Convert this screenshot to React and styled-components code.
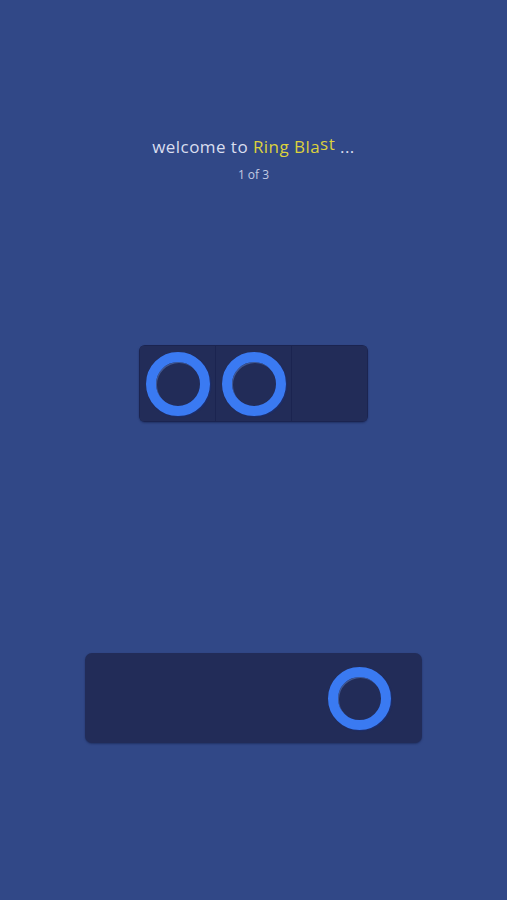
import React from 'react'
import styled, { createGlobalStyle } from 'styled-components'

const GlobalStyle = createGlobalStyle`
  html, body {
    margin: 0;
    padding: 0;
    background: #314887;
  }
  body {
    font-family: "Open Sans", "Liberation Sans", sans-serif;
  }
`

const Screen = styled.div`
  width: 507px;
  height: 900px;
  background: #314887;
  display: flex;
  flex-direction: column;
  align-items: center;
  box-sizing: border-box;
  padding-top: 135px;
`

const Header = styled.div`
  display: flex;
  flex-direction: column;
  align-items: center;
  gap: 8px;
`

const Title = styled.div`
  font-size: 17px;
  color: #d9deef;
  letter-spacing: 0.45px;
`

const Highlight = styled.span`
  color: #dcd23c;
`

const Raised = styled.span`
  display: inline-block;
  transform: translateY(-3px);
`

const Counter = styled.div`
  font-size: 12px;
  color: #c3cbe3;
`

const Board = styled.div`
  margin-top: 162px;
  display: grid;
  grid-template-columns: repeat(${p => p.$cols}, 75px);
  gap: 1px;
  padding: 1px;
  background: #1b2450;
  border-radius: 6px;
  overflow: hidden;
  box-shadow: 0 1px 2px rgba(10, 18, 50, 0.4);
`

const Cell = styled.div`
  height: 75px;
  background: #222c58;
  display: flex;
  align-items: center;
  justify-content: center;
`

const Tray = styled.div`
  margin-top: 231px;
  width: 337px;
  height: 90px;
  box-sizing: border-box;
  background: #222c58;
  border-radius: 7px;
  display: flex;
  align-items: center;
  justify-content: flex-end;
  padding-right: 31px;
  box-shadow: 0 1px 2px rgba(10, 18, 50, 0.4);
`

const Ring = styled.div`
  width: ${p => p.$size}px;
  height: ${p => p.$size}px;
  box-sizing: border-box;
  border-radius: 50%;
  border: 10px solid #3a7af2;
  box-shadow:
    inset 1px 1px 0 rgba(120, 170, 255, 0.35),
    1px 1px 1px rgba(20, 50, 140, 0.5);
`

const slots = [true, true, false]

export default function App() {
  return (
    <>
      <GlobalStyle />
      <Screen>
        <Header>
          <Title>
            welcome to <Highlight>Ring Bla<Raised>st</Raised></Highlight> ...
          </Title>
          <Counter>1 of 3</Counter>
        </Header>

        <Board $cols={slots.length}>
          {slots.map((filled, i) => (
            <Cell key={i}>{filled && <Ring $size={64} />}</Cell>
          ))}
        </Board>

        <Tray>
          <Ring $size={63} />
        </Tray>
      </Screen>
    </>
  )
}
